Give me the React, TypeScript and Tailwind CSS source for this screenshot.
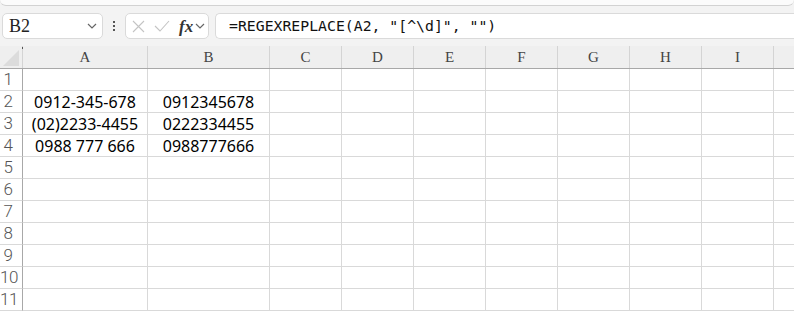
import React from "react";

const cols = [
  { l: "A", w: "w-[125px]" },
  { l: "B", w: "w-[122px]" },
  { l: "C", w: "w-[72px]" },
  { l: "D", w: "w-[72px]" },
  { l: "E", w: "w-[72px]" },
  { l: "F", w: "w-[72px]" },
  { l: "G", w: "w-[72px]" },
  { l: "H", w: "w-[72px]" },
  { l: "I", w: "w-[72px]" },
  { l: "", w: "w-[40px]" },
];

const data: Record<number, [string, string]> = {
  2: ["0912-345-678", "0912345678"],
  3: ["(02)2233-4455", "0222334455"],
  4: ["0988 777 666", "0988777666"],
};

function Chevron({ className }: { className?: string }) {
  return (
    <svg width="10" height="6" viewBox="0 0 10 6" className={className}>
      <path d="M1 1 L5 5 L9 1" fill="none" stroke="#666" strokeWidth="1.2" />
    </svg>
  );
}

export default function App() {
  return (
    <div className="w-[794px] h-[311px] overflow-hidden bg-[#f3f3f3] flex flex-col">
      <div className="h-[6px] shrink-0 bg-[#fbfbfb] border-b border-[#d2d2d2] rounded-b-[6px]" />
      <div className="h-[40px] shrink-0 flex items-start pt-[7px] pl-[2px]">
        <div className="w-[101px] h-[26px] bg-white border border-[#dadada] rounded-[5px] flex items-center pl-[6px] pr-[5px]">
          <span className="text-[18px] leading-none text-[#222] flex-1" style={{ fontFamily: '"Liberation Serif", serif' }}>
            B2
          </span>
          <Chevron />
        </div>
        <div className="w-[22px] h-[26px] flex flex-col items-center justify-center gap-[2px]">
          <div className="w-[2px] h-[2px] bg-[#555]" />
          <div className="w-[2px] h-[2px] bg-[#555]" />
          <div className="w-[2px] h-[2px] bg-[#555]" />
        </div>
        <div className="w-[84px] h-[26px] bg-white border border-[#dadada] rounded-[5px] flex items-center pl-[6px]">
          <svg width="13" height="13" viewBox="0 0 13 13">
            <path d="M1 1 L12 12 M12 1 L1 12" stroke="#c4c4c4" strokeWidth="1.1" fill="none" />
          </svg>
          <svg width="16" height="12" viewBox="0 0 16 12" className="ml-[9px]">
            <path d="M1 6 L6 11 L15 1" stroke="#c4c4c4" strokeWidth="1.1" fill="none" />
          </svg>
          <span
            className="ml-[9px] text-[17px] italic font-bold leading-none text-[#333]"
            style={{ fontFamily: '"Liberation Serif", serif' }}
          >
            fx
          </span>
          <Chevron className="ml-[2px]" />
        </div>
        <div className="ml-[6px] flex-1 h-[26px] bg-white border border-r-0 border-[#dadada] rounded-l-[5px] flex items-center pl-[13px]">
          <span
            className="text-[14.8px] leading-none text-[#111]"
            style={{ fontFamily: '"DejaVu Sans Mono", "Liberation Mono", monospace' }}
          >
            =REGEXREPLACE(A2, "[^\d]", "")
          </span>
        </div>
      </div>
      <div className="h-[23px] shrink-0 flex border-b border-[#a8a8a8] bg-[#efefef] box-border">
        <div className="w-[23px] shrink-0 relative border-r border-[#d4d4d4] box-border">
          <div className="absolute left-[22px] top-[1px] w-[1px] h-[2px] bg-[#555]" />
          <svg width="16" height="16" viewBox="0 0 16 16" className="absolute right-[3px] bottom-[2px]">
            <path d="M16 0 L16 16 L0 16 Z" fill="#dcdcdc" />
          </svg>
        </div>
        {cols.map((c, i) => (
          <div
            key={i}
            className={`${c.w} shrink-0 border-r border-[#d4d4d4] box-border flex items-center justify-center text-[15px] text-[#444]`}
            style={{ fontFamily: '"Liberation Serif", serif' }}
          >
            {c.l}
          </div>
        ))}
      </div>
      <div className="flex flex-col bg-white">
        {Array.from({ length: 11 }, (_, r) => r + 1).map((r) => (
          <div key={r} className="h-[22px] shrink-0 flex">
            <div className="w-[23px] shrink-0 border-r border-b border-r-[#a8a8a8] border-b-[#d9d9d9] box-border flex items-center">
              <span
                className="w-[16px] text-center text-[17px] font-light leading-none text-[#555]"
                style={{ fontFamily: 'Roboto, "Noto Sans", sans-serif', letterSpacing: "-0.5px" }}
              >
                {r}
              </span>
            </div>
            {cols.map((c, i) => (
              <div
                key={i}
                className={`${c.w} shrink-0 border-r border-b border-[#d9d9d9] box-border flex items-center justify-center text-[16px] text-black leading-none whitespace-nowrap`}
                style={{ fontFamily: '"Noto Sans", sans-serif' }}
              >
                {i < 2 && data[r] ? data[r][i] : ""}
              </div>
            ))}
          </div>
        ))}
      </div>
    </div>
  );
}
